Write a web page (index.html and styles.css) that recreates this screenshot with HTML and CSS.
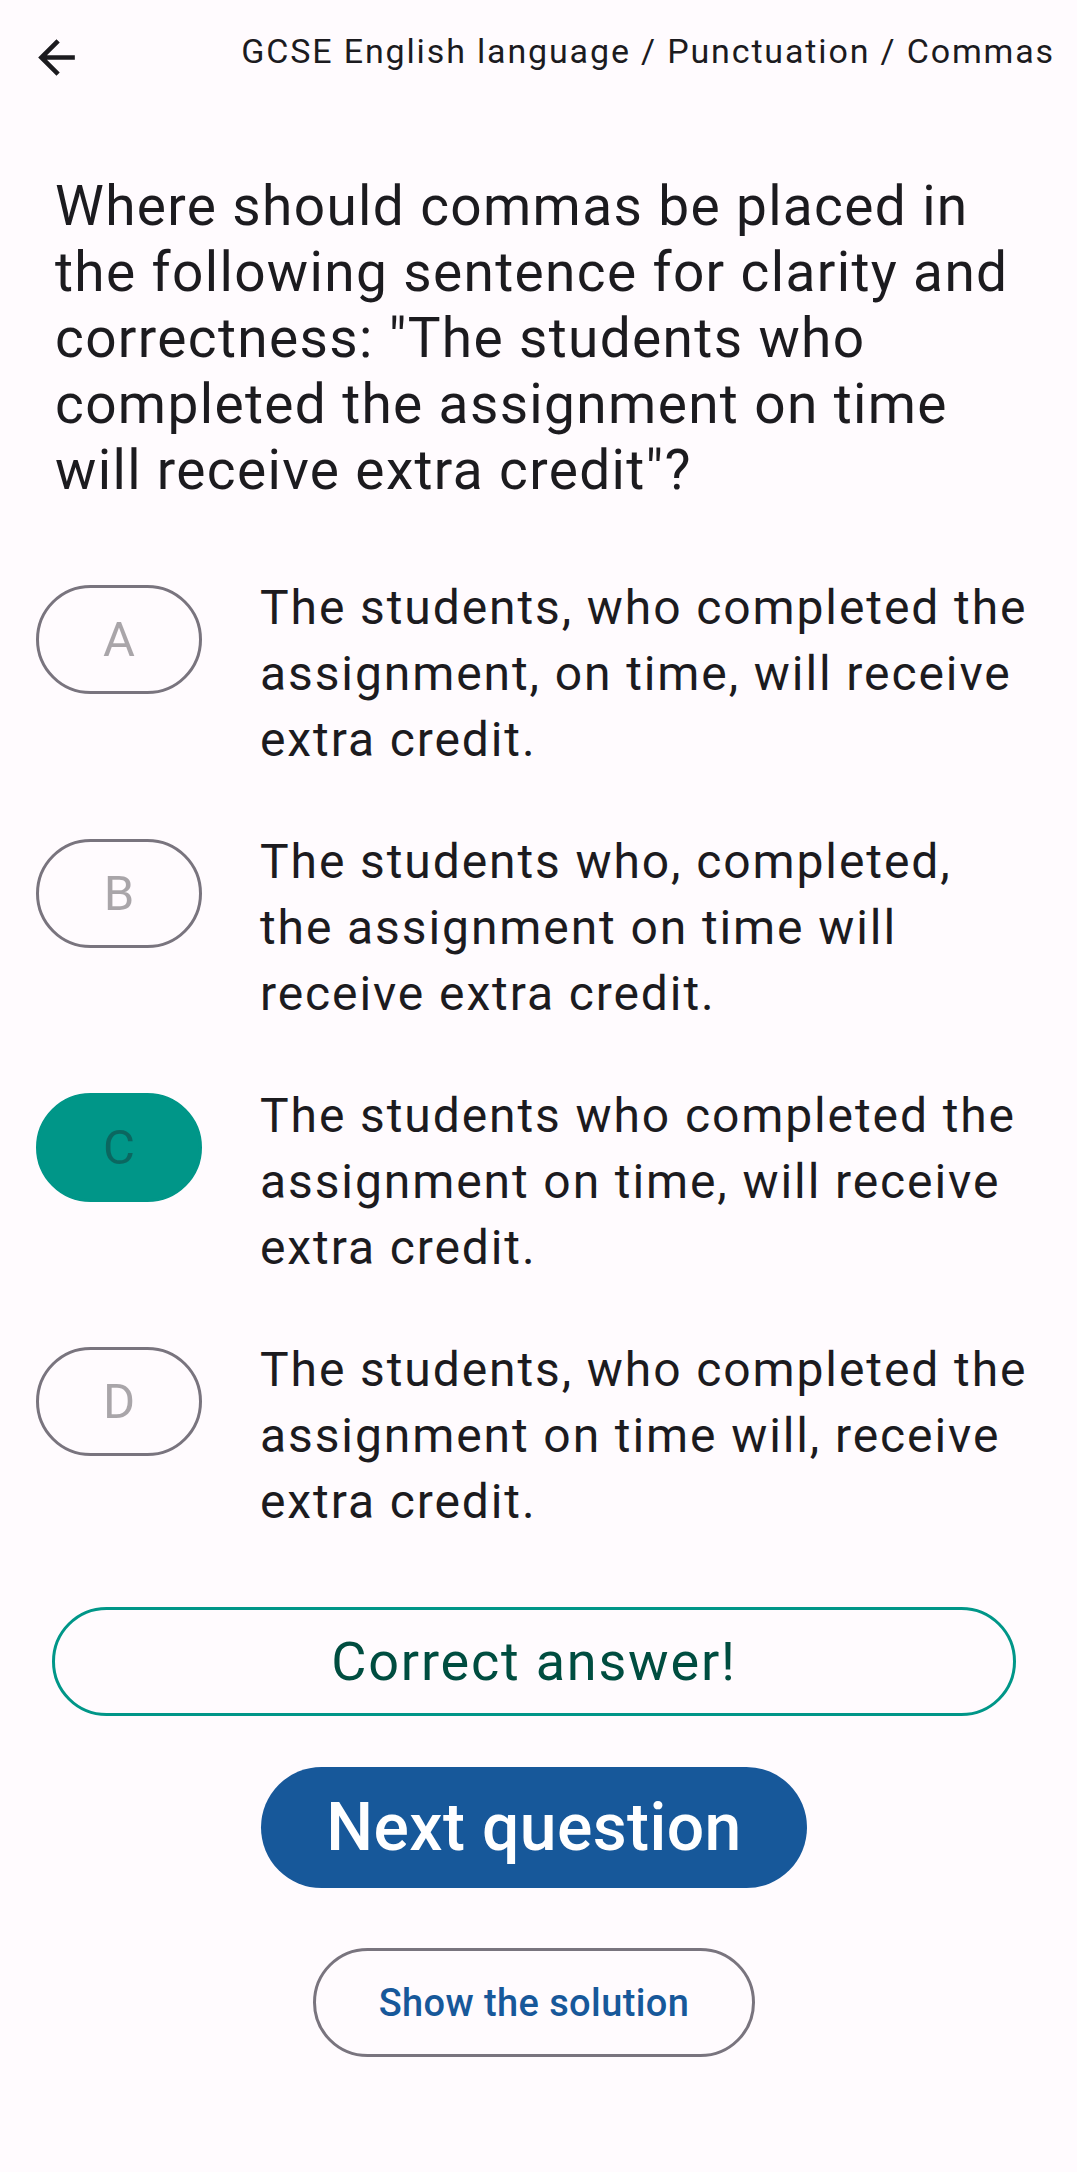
FILE: index.html
```html
<!DOCTYPE html>
<html>
<head>
    <meta charset="UTF-8">
    <meta name="viewport" content="width=device-width, initial-scale=1.0">
    <link rel="stylesheet" href="styles.css">
</head>
<body>
    <div class="topo">
        <button class="voltar" aria-label="Voltar">
            <svg width="55" height="55" viewBox="0 0 24 24"><path d="M20 11H7.83l5.59-5.59L12 4l-8 8 8 8 1.41-1.41L7.83 13H20v-2z" fill="#1c1b1f"/></svg>
        </button>
        <div class="trilho">GCSE English language / Punctuation / Commas</div>
    </div>

    <p class="pergunta">Where should commas be placed in the following sentence for clarity and correctness: "The students who completed the assignment on time will receive extra credit"?</p>

    <div class="opcoes">
        <div class="opcao">
            <div class="letra">A</div>
            <div class="texto">The students, who completed the assignment, on time, will receive extra credit.</div>
        </div>
        <div class="opcao">
            <div class="letra">B</div>
            <div class="texto">The students who, completed, the assignment on time will receive extra credit.</div>
        </div>
        <div class="opcao">
            <div class="letra certa">C</div>
            <div class="texto">The students who completed the assignment on time, will receive extra credit.</div>
        </div>
        <div class="opcao">
            <div class="letra">D</div>
            <div class="texto">The students, who completed the assignment on time will, receive extra credit.</div>
        </div>
    </div>

    <div class="acoes">
        <div class="resultado">Correct answer!</div>
        <button class="proxima">Next question</button>
        <button class="solucao">Show the solution</button>
    </div>
</body>
</html>
```
FILE: styles.css
```css
body {
    margin: 0;
    background-color: #fffbfe;
    color: #1c1b1f;
    font-family: Roboto, "Noto Sans", sans-serif;
}
button {
    font-family: inherit;
    cursor: pointer;
}
.topo {
    display: flex;
    justify-content: space-between;
    align-items: flex-start;
    padding: 0 22px 0 29px;
}
.voltar {
    background: none;
    border: none;
    padding: 0;
    margin-top: 30px;
    width: 55px;
    height: 55px;
}
.voltar svg {
    display: block;
}
.trilho {
    font-size: 34px;
    line-height: 40px;
    margin-top: 31px;
    letter-spacing: 1.85px;
}
.pergunta {
    margin: 88px 0 0 55px;
    width: 975px;
    font-size: 55px;
    line-height: 66px;
    letter-spacing: 1.35px;
}
.opcoes {
    display: flex;
    flex-direction: column;
    gap: 56px;
    margin: 72px 0 0 36px;
}
.opcao {
    display: flex;
    align-items: flex-start;
    gap: 58px;
}
.letra {
    flex: none;
    box-sizing: border-box;
    width: 166px;
    height: 109px;
    margin-top: 10px;
    border: 3px solid #79747e;
    border-radius: 55px;
    display: flex;
    align-items: center;
    justify-content: center;
    font-size: 49px;
    color: rgba(28, 27, 31, 0.38);
}
.letra.certa {
    background-color: #009688;
    border-color: #009688;
}
.texto {
    font-size: 48px;
    line-height: 66px;
    letter-spacing: 1.9px;
    width: 770px;
}
.acoes {
    display: flex;
    flex-direction: column;
    align-items: center;
    margin: 72px 61px 0 52px;
}
.resultado {
    box-sizing: border-box;
    width: 100%;
    height: 109px;
    border: 3px solid #009688;
    border-radius: 55px;
    display: flex;
    align-items: center;
    justify-content: center;
    font-size: 54px;
    color: #004d40;
    letter-spacing: 1.8px;
}
.proxima {
    margin-top: 51px;
    width: 546px;
    height: 121px;
    border: none;
    border-radius: 61px;
    background-color: #17589a;
    color: #fff;
    font-size: 66px;
    font-weight: 500;
    letter-spacing: 0.4px;
}
.solucao {
    margin-top: 60px;
    box-sizing: border-box;
    width: 442px;
    height: 109px;
    border: 3px solid #79747e;
    border-radius: 55px;
    background: none;
    color: #17589a;
    font-size: 38px;
    font-weight: 500;
    letter-spacing: 0.4px;
}
```
